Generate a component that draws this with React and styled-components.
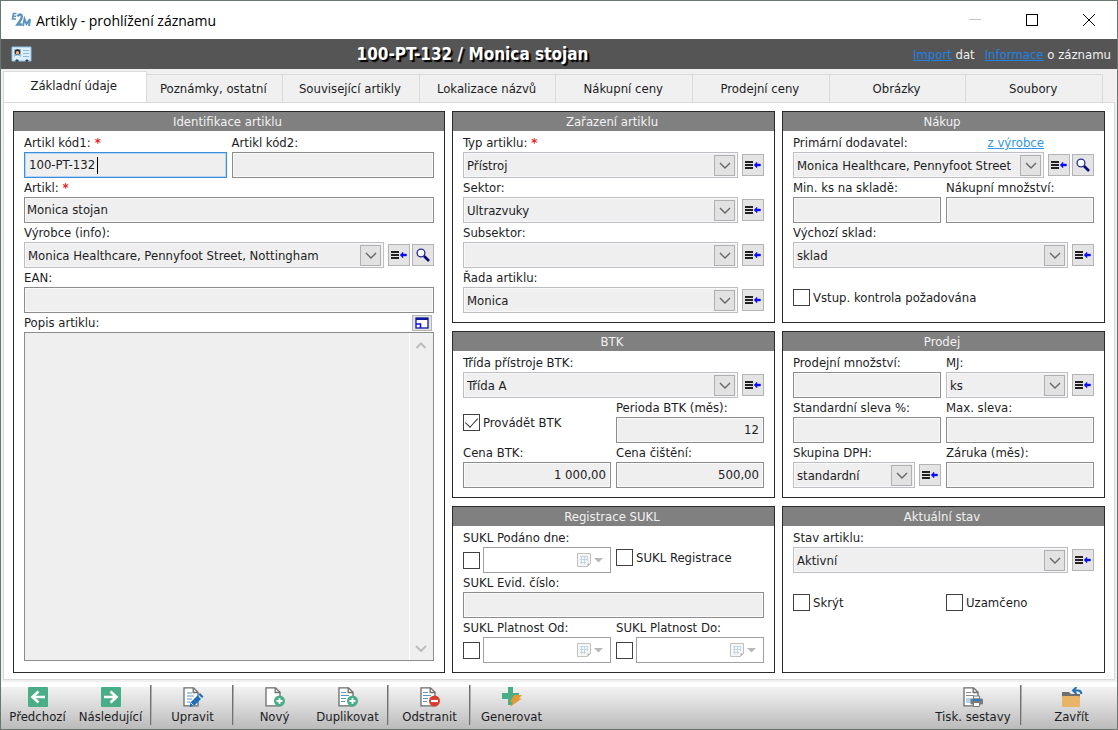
import React, { useState } from "react";
import styled, { createGlobalStyle, css } from "styled-components";

const GlobalStyle = createGlobalStyle`
  * {
    box-sizing: border-box;
  }
  body {
    margin: 0;
    background: #f0f0f0;
  }
  body,
  button,
  input,
  select,
  textarea {
    font-family: "DejaVu Sans Condensed", "DejaVu Sans", sans-serif;
    font-size: 13px;
    color: #1c1c24;
  }
`;

const Window = styled.div`
  min-height: 100vh;
  display: flex;
  flex-direction: column;
  border: 1px solid #68776d;
  background: #f0f0f0;
`;

const TitleBar = styled.header`
  display: flex;
  align-items: center;
  height: 38px;
  padding-left: 10px;
  background: #ffffff;
`;
const AppTitle = styled.h1`
  flex: 1;
  margin: 0 0 0 4px;
  font-family: "Open Sans", "Noto Sans", sans-serif;
  font-size: 14px;
  font-weight: 400;
  color: #000000;
`;
const WindowButton = styled.button`
  display: flex;
  align-items: center;
  justify-content: center;
  width: 57px;
  height: 36px;
  padding: 0;
  border: none;
  background: none;
`;

const RecordBar = styled.div`
  display: flex;
  align-items: center;
  height: 30px;
  padding: 0 6px 0 10px;
  background: #555555;
`;
const RecordTitle = styled.h2`
  flex: 1;
  margin: 0;
  text-align: center;
  font-size: 17px;
  color: #ffffff;
  text-shadow: 2px 2px 1px #000000;
`;
const RecordLinks = styled.div`
  display: flex;
  gap: 10px;
  color: #f0f0f0;
  a {
    color: #1e82e6;
  }
`;

const Tabs = styled.nav`
  display: flex;
  align-items: flex-end;
  height: 33px;
  padding: 0 14px 0 2px;
`;
const Tab = styled.button`
  flex: 137 1 0;
  min-width: 0;
  height: 28px;
  padding: 0 2px 0 0;
  border: 1px solid #dadada;
  border-left: none;
  border-bottom: none;
  background: #f0f0f0;
  white-space: nowrap;
  ${(props) =>
    props.$active &&
    css`
      flex-grow: 143;
      height: 31px;
      padding-bottom: 3px;
      border-left: 1px solid #dadada;
      background: #ffffff;
    `}
`;
const Page = styled.main`
  flex: 1;
  display: grid;
  grid-template-columns: 432fr 323fr 323fr;
  grid-template-rows: auto auto auto;
  align-content: start;
  gap: 8px 7px;
  margin: 0 2px 2px;
  padding: 8px 9px 6px;
  border: 1px solid #dadada;
  background: #ffffff;
`;

const GroupBox = styled.section`
  display: flex;
  flex-direction: column;
  min-width: 0;
  border: 1px solid #2a2a2a;
  background: #ffffff;
  ${(props) => props.$tall && "grid-row: span 3;"}
`;
const GroupTitle = styled.h3`
  height: 19px;
  margin: 0;
  padding-right: 3px;
  line-height: 20px;
  text-align: center;
  font-size: 13px;
  font-weight: 400;
  color: #f2f2f2;
  background: #808080;
`;
const Fields = styled.div`
  display: grid;
  grid-template-columns: repeat(2, minmax(0, 1fr));
  column-gap: 5px;
  padding: 2px 10px 0;
`;
const FieldsEnd = styled.div`
  height: 9px;
`;
const FieldBox = styled.div`
  min-width: 0;
  ${(props) => props.$wide && "grid-column: span 2;"}
`;
const LabelRow = styled.div`
  display: flex;
  justify-content: space-between;
  height: 19px;
  line-height: 20px;
  white-space: nowrap;
  a {
    margin-right: 50px;
    color: #3296e6;
  }
`;
const Star = styled.span`
  margin-left: 4px;
  font-weight: 700;
  color: #ee2222;
`;
const ControlRow = styled.div`
  position: relative;
  display: flex;
  align-items: center;
  gap: 2px;
`;
const TextInput = styled.input`
  width: 100%;
  height: 26px;
  padding: 0 4px 1px 2px;
  border: 1px solid #8c8c8c;
  outline: none;
  background: #efefef;
  box-shadow: inset 0 0 0 1px #fafafa;
  text-align: ${(props) => (props.$right ? "right" : "left")};
  ${(props) =>
    props.$focused &&
    css`
      padding-left: 4px;
      border-color: #3a8fdc;
      box-shadow: inset 0 0 0 1px #b4d6f4;
    `}
`;
const Caret = styled.span`
  position: absolute;
  left: 73px;
  width: 1px;
  height: 17px;
  background: #000000;
`;

const Combo = styled.div`
  flex: 1;
  display: flex;
  align-items: center;
  min-width: 0;
  height: 26px;
  margin-right: 2px;
  padding: 1px 2px 1px 1px;
  border: 1px solid #bdbdc4;
  background: #efefef;
  box-shadow: inset 0 0 0 1px #f8f8f8;
`;
const ComboSelect = styled.select`
  flex: 1;
  min-width: 0;
  height: 22px;
  padding: 0 0 0 2px;
  border: none;
  outline: none;
  appearance: none;
  background: transparent;
`;
const ComboArrow = styled.span`
  display: flex;
  align-items: center;
  justify-content: center;
  width: 21px;
  height: 21px;
  border: 1px solid #b0b0b0;
  background: #e2e2e2;
  pointer-events: none;
`;
const IconButton = styled.button`
  display: flex;
  align-items: center;
  justify-content: center;
  flex: none;
  width: ${(props) => (props.$small ? "20px" : "22px")};
  height: ${(props) => (props.$small ? "16px" : "22px")};
  padding: 0;
  border: 1px solid #b4b4b4;
  background: #e4e4e4;
`;

const CheckLabel = styled.label`
  display: flex;
  align-items: center;
  gap: 3px;
  height: 45px;
  padding-top: ${(props) => (props.$high ? "3px" : "14px")};
  white-space: nowrap;
  ${(props) => props.$wide && "grid-column: span 2;"}
`;
const CheckInput = styled.input`
  display: grid;
  place-items: center;
  flex: none;
  width: 17px;
  height: 17px;
  margin: 0;
  border: 1px solid #404040;
  appearance: none;
  background: #ffffff;
  &:checked::after {
    content: "";
    width: 6px;
    height: 11px;
    margin-bottom: 3px;
    border: solid #333333;
    border-width: 0 1px 1px 0;
    transform: rotate(42deg);
  }
`;
const DateBox = styled.div`
  flex: 1;
  display: flex;
  align-items: center;
  min-width: 0;
  height: 26px;
  margin-left: 1px;
  padding-right: 7px;
  border: 1px solid #a0a0a0;
  background: #ffffff;
`;
const DateInput = styled.input`
  flex: 1;
  min-width: 0;
  border: none;
  outline: none;
  background: transparent;
`;

const MemoSection = styled.div`
  flex: 1;
  display: flex;
  flex-direction: column;
  padding: 0 10px 11px;
`;
const MemoLabelRow = styled(LabelRow)`
  align-items: center;
  padding-right: 2px;
`;
const Memo = styled.div`
  flex: 1;
  display: flex;
  border: 1px solid #8c8c8c;
  background: #efefef;
`;
const MemoText = styled.textarea`
  flex: 1;
  min-width: 0;
  border: none;
  outline: none;
  resize: none;
  background: transparent;
`;
const MemoRail = styled.div`
  display: flex;
  flex-direction: column;
  justify-content: space-between;
  align-items: center;
  width: 24px;
  padding: 9px 2px 8px 0;
  border-left: 1px solid #ffffff;
`;

const Toolbar = styled.footer`
  display: flex;
  height: 47px;
  border-top: 5px solid #ffffff;
  background: linear-gradient(#f2f2f2, #dadada 45%, #bababa);
`;
const ToolButton = styled.button`
  display: flex;
  flex-direction: column;
  align-items: center;
  gap: 1px;
  width: ${(props) => props.$width || 73}px;
  padding: 0;
  border: none;
  background: none;
  line-height: 18px;
  white-space: nowrap;
`;
const ToolDivider = styled.span`
  width: 1px;
  height: 40px;
  margin: -2px 5px 0 3px;
  background: #707070;
  box-shadow: 1px 0 0 #b0b0b0;
`;
const Spacer = styled.span`
  flex: 1;
`;

const AppLogo = () => (
  <svg width="21" height="16" viewBox="0 0 21 16" fill="none" stroke="#5b93bf">
    <path d="M5.500 1.500H2.500L1.500 7H5M2 4.200h3" strokeWidth="1.600" />
    <path d="M6.500 4.500Q8 1.500 10.500 3Q12 5.500 6.500 12.500H11" strokeWidth="2.400" />
    <path d="M12 14l1.500-7 2 5 3.500-5-1 7" strokeWidth="2" />
  </svg>
);

const CardIcon = () => (
  <svg width="21" height="16" viewBox="0 0 21 16">
    <path
      d="M1 1h19v14h-3l-1-1-2 1H8l-2-1-2 1H1z"
      fill="#dceefb"
      stroke="#8dbfe6"
    />
    <rect x="3" y="3" width="7" height="8" fill="#8dbce2" />
    <circle cx="6.500" cy="6" r="2.800" fill="#3a2620" />
    <circle cx="6.500" cy="6.800" r="1.700" fill="#f0b27a" />
    <path d="M3 11q3.500-3 7 0z" fill="#f6f6f6" />
    <path d="M12 4.500h6M12 7.500h6M12 10.500h6" stroke="#8fb9dc" />
    <path d="M4 15l2-2 2 2zM14 15l2-2 2 2z" fill="#244a6c" />
  </svg>
);

const Chevron = ({ up, color = "#666666", thick = 1.4 }) => (
  <svg width="12" height="8" viewBox="0 0 12 8" fill="none">
    <path
      d={up ? "M1.500 6L6 1.500L10.500 6" : "M1 2L6 7L11 2"}
      stroke={color}
      strokeWidth={thick}
    />
  </svg>
);

const ListIcon = () => (
  <svg width="16" height="12" viewBox="0 0 16 12">
    <path d="M0 3h8M0 6h8M0 9h8" stroke="#222222" strokeWidth="1.900" />
    <path d="M9 6l3-3v2h3.500v2H12v2z" fill="#0a0aff" stroke="#0a0aff" strokeWidth=".4" />
  </svg>
);

const SearchIcon = () => (
  <svg width="14" height="14" viewBox="0 0 14 14" fill="none">
    <circle cx="5" cy="5" r="3.900" fill="#f6fbff" stroke="#2a2a90" strokeWidth="1.300" />
    <path d="M8 8l5 5" stroke="#0b0b80" strokeWidth="2.600" />
  </svg>
);

const ExpandIcon = () => (
  <svg width="14" height="12" viewBox="0 0 14 12" fill="none">
    <rect x="1" y="1" width="12" height="10" fill="#ffffff" stroke="#0a1a9a" strokeWidth="1.300" />
    <path d="M1 2h12" stroke="#0a1a9a" strokeWidth="2" />
    <path d="M1 7h4.500v4" stroke="#0a0aff" strokeWidth="1.500" />
  </svg>
);

const CalendarIcon = () => (
  <svg width="26" height="16" viewBox="0 0 26 16" fill="none">
    <path d="M.5 1.500h13v10l-3 3H.5z" fill="#f4f6f8" stroke="#c6c0ba" />
    <path d="M3 4.500h8M3 7.500h8M3 10.500h6M4.500 4v8M7.500 4v8M10.500 4v5" stroke="#c3d6e4" />
    <path d="M13.500 11.500h-3v3z" fill="#b8b0a8" />
    <path d="M17 6h9l-4.500 4.500z" fill="#b8b8b8" />
  </svg>
);

const ArrowIcon = ({ right }) => (
  <svg width="20" height="20" viewBox="0 0 20 20" fill="none">
    <rect width="20" height="20" rx="1" fill="#49ae87" />
    <path
      d={right ? "M3 10h12M9.500 4.500L15.500 10L9.500 15.500" : "M17 10H5M10.500 4.500L4.500 10L10.500 15.500"}
      stroke="#ffffff"
      strokeWidth="2.600"
    />
  </svg>
);

const docShapes = {
  edit: (
    <>
      <path d="M5 6h5M5 9h7M5 12h5M5 15h3" stroke="#5c94c8" />
      <path d="M8.500 15.500l7-7 3.500 3.500-7 7-4.500 1z" fill="#1f6fb8" />
      <path d="M16.500 7.500l1.500-1.500 3.500 3.500-1.500 1.500z" fill="#1f6fb8" />
      <path d="M9 16l2.500 2.500" stroke="#ffffff" strokeWidth=".8" />
    </>
  ),
  plus: (
    <>
      <circle cx="15.500" cy="14" r="5.500" fill="#49ae87" />
      <path d="M12.500 14h6M15.500 11v6" stroke="#ffffff" strokeWidth="1.800" />
    </>
  ),
  minus: (
    <>
      <circle cx="15.500" cy="14" r="5.500" fill="#d83c2b" />
      <path d="M12 14h7" stroke="#ffffff" strokeWidth="2.200" />
    </>
  ),
  print: (
    <>
      <rect x="4" y="11" width="5" height="5" fill="#aed5f4" />
      <path d="M11.500 9h6v3h-6z" fill="#ffffff" stroke="#777777" />
      <rect x="8.500" y="11.500" width="12.500" height="6" rx="1" fill="#7c7c7c" />
      <path d="M11 13h7.500" stroke="#2b78c4" strokeWidth="2" />
      <path d="M11.500 15.500h6v4h-6z" fill="#ffffff" stroke="#777777" />
    </>
  ),
};

const DocIcon = ({ kind, lines }) => (
  <svg width="22" height="20" viewBox="0 0 22 20" fill="none">
    <path d="M2 .8h9.500l4.500 4.500v13.500H2z" fill="#ffffff" stroke="#6c6c6c" strokeWidth="1.300" />
    <path d="M11.200 1v4.500H16" stroke="#6c6c6c" strokeWidth="1.300" />
    {lines && <path d="M4 5.500h5M4 8.500h8M4 11.500h5M4 14.500h4" stroke={lines} strokeWidth="1.200" />}
    {docShapes[kind]}
  </svg>
);

const GenerateIcon = () => (
  <svg width="22" height="20" viewBox="0 0 22 20">
    <path d="M7 0h5v6h6v6h-6v6H7v-6H1V6h6z" fill="#49ae87" />
    <path d="M13 8h8l-3 3.500h3L9 20l3-5H9z" fill="#e59a36" />
  </svg>
);

const FolderIcon = () => (
  <svg width="22" height="20" viewBox="0 0 22 20" fill="none">
    <path d="M1 5h7l2 2h9v4H1z" fill="#6f6f6f" />
    <rect x="1" y="9" width="18" height="11" rx="1" fill="#eab468" />
    <path d="M12 3.500h5q3 0 3.500 3.500M15.500 0L12 3.500L15.500 7" stroke="#2670b4" strokeWidth="2" />
  </svg>
);

const Field = ({ id, label, wide, required, value = "", right, focused }) => (
  <FieldBox $wide={wide}>
    <LabelRow>
      <label htmlFor={id}>
        {label}
        {required && <Star>*</Star>}
      </label>
    </LabelRow>
    <ControlRow>
      <TextInput id={id} type="text" defaultValue={value} $right={right} $focused={focused} />
      {focused && <Caret />}
    </ControlRow>
  </FieldBox>
);

const SelectField = ({ id, label, wide, required, value = "", link, search }) => (
  <FieldBox $wide={wide}>
    <LabelRow>
      <label htmlFor={id}>
        {label}
        {required && <Star>*</Star>}
      </label>
      {link && <a href="#vyrobce">{link}</a>}
    </LabelRow>
    <ControlRow>
      <Combo>
        <ComboSelect id={id} defaultValue={value}>
          <option value={value}>{value}</option>
        </ComboSelect>
        <ComboArrow>
          <Chevron />
        </ComboArrow>
      </Combo>
      <IconButton type="button" aria-label="Vybrat ze seznamu">
        <ListIcon />
      </IconButton>
      {search && (
        <IconButton type="button" aria-label="Hledat">
          <SearchIcon />
        </IconButton>
      )}
    </ControlRow>
  </FieldBox>
);

const DateField = ({ id, label }) => (
  <FieldBox>
    <LabelRow>
      <label htmlFor={id}>{label}</label>
    </LabelRow>
    <ControlRow>
      <CheckInput type="checkbox" aria-label={label} />
      <DateBox>
        <DateInput id={id} type="text" />
        <CalendarIcon />
      </DateBox>
    </ControlRow>
  </FieldBox>
);

const Check = ({ label, wide, high, checked }) => (
  <CheckLabel $wide={wide} $high={high}>
    <CheckInput type="checkbox" defaultChecked={checked} />
    {label}
  </CheckLabel>
);

const Group = ({ title, children }) => (
  <GroupBox>
    <GroupTitle>{title}</GroupTitle>
    <Fields>{children}</Fields>
    <FieldsEnd />
  </GroupBox>
);

const tabNames = [
  "Základní údaje",
  "Poznámky, ostatní",
  "Související artikly",
  "Lokalizace názvů",
  "Nákupní ceny",
  "Prodejní ceny",
  "Obrázky",
  "Soubory",
];

const App = () => {
  const [activeTab, setActiveTab] = useState(0);

  return (
    <Window>
      <GlobalStyle />
      <TitleBar>
        <AppLogo />
        <AppTitle>Artikly - prohlížení záznamu</AppTitle>
        <WindowButton aria-label="Minimalizovat">
          <svg width="12" height="12" stroke="#c4c4c4">
            <path d="M0 5.500h12" />
          </svg>
        </WindowButton>
        <WindowButton aria-label="Maximalizovat">
          <svg width="12" height="12" fill="none" stroke="#000000">
            <rect x=".5" y=".5" width="11" height="11" />
          </svg>
        </WindowButton>
        <WindowButton aria-label="Zavřít okno">
          <svg width="12" height="12" stroke="#000000">
            <path d="M0 0l12 12M12 0L0 12" />
          </svg>
        </WindowButton>
      </TitleBar>
      <RecordBar>
        <CardIcon />
        <RecordTitle>100-PT-132 / Monica stojan</RecordTitle>
        <RecordLinks>
          <span>
            <a href="#import">Import</a> dat
          </span>
          <span>
            <a href="#informace">Informace</a> o záznamu
          </span>
        </RecordLinks>
      </RecordBar>
      <Tabs>
        {tabNames.map((name, index) => (
          <Tab
            key={name}
            type="button"
            $active={index === activeTab}
            onClick={() => setActiveTab(index)}
          >
            {name}
          </Tab>
        ))}
      </Tabs>
      <Page>
        <GroupBox $tall>
          <GroupTitle>Identifikace artiklu</GroupTitle>
          <Fields>
            <Field id="kod1" label="Artikl kód1:" required value="100-PT-132" focused />
            <Field id="kod2" label="Artikl kód2:" />
            <Field id="artikl" label="Artikl:" required wide value="Monica stojan" />
            <SelectField
              id="vyrobce"
              label="Výrobce (info):"
              wide
              search
              value="Monica Healthcare, Pennyfoot Street, Nottingham"
            />
            <Field id="ean" label="EAN:" wide />
          </Fields>
          <MemoSection>
            <MemoLabelRow>
              <label htmlFor="popis">Popis artiklu:</label>
              <IconButton type="button" $small aria-label="Zvětšit">
                <ExpandIcon />
              </IconButton>
            </MemoLabelRow>
            <Memo>
              <MemoText id="popis" />
              <MemoRail>
                <Chevron up color="#bcbcbc" thick={2} />
                <Chevron color="#bcbcbc" thick={2} />
              </MemoRail>
            </Memo>
          </MemoSection>
        </GroupBox>

        <Group title="Zařazení artiklu">
          <SelectField id="typ" label="Typ artiklu:" required wide value="Přístroj" />
          <SelectField id="sektor" label="Sektor:" wide value="Ultrazvuky" />
          <SelectField id="subsektor" label="Subsektor:" wide />
          <SelectField id="rada" label="Řada artiklu:" wide value="Monica" />
        </Group>

        <Group title="Nákup">
          <SelectField
            id="dodavatel"
            label="Primární dodavatel:"
            link="z výrobce"
            wide
            search
            value="Monica Healthcare, Pennyfoot Street"
          />
          <Field id="minks" label="Min. ks na skladě:" />
          <Field id="nakupmn" label="Nákupní množství:" />
          <SelectField id="sklad" label="Výchozí sklad:" wide value="sklad" />
          <Check label="Vstup. kontrola požadována" wide />
        </Group>

        <Group title="BTK">
          <SelectField id="trida" label="Třída přístroje BTK:" wide value="Třída A" />
          <Check label="Provádět BTK" high checked />
          <Field id="perioda" label="Perioda BTK (měs):" value="12" right />
          <Field id="cenabtk" label="Cena BTK:" value="1 000,00" right />
          <Field id="cenacist" label="Cena čištění:" value="500,00" right />
        </Group>

        <Group title="Prodej">
          <Field id="prodejmn" label="Prodejní množství:" />
          <SelectField id="mj" label="MJ:" value="ks" />
          <Field id="sleva" label="Standardní sleva %:" />
          <Field id="maxsleva" label="Max. sleva:" />
          <SelectField id="dph" label="Skupina DPH:" value="standardní" />
          <Field id="zaruka" label="Záruka (měs):" />
        </Group>

        <Group title="Registrace SUKL">
          <DateField id="podano" label="SUKL Podáno dne:" />
          <Check label="SUKL Registrace" />
          <Field id="evid" label="SUKL Evid. číslo:" wide />
          <DateField id="platod" label="SUKL Platnost Od:" />
          <DateField id="platdo" label="SUKL Platnost Do:" />
        </Group>

        <Group title="Aktuální stav">
          <SelectField id="stav" label="Stav artiklu:" wide value="Aktivní" />
          <Check label="Skrýt" />
          <Check label="Uzamčeno" />
        </Group>
      </Page>
      <Toolbar>
        <ToolButton>
          <ArrowIcon />
          Předchozí
        </ToolButton>
        <ToolButton>
          <ArrowIcon right />
          Následující
        </ToolButton>
        <ToolDivider />
        <ToolButton>
          <DocIcon kind="edit" />
          Upravit
        </ToolButton>
        <ToolDivider />
        <ToolButton>
          <DocIcon kind="plus" />
          Nový
        </ToolButton>
        <ToolButton>
          <DocIcon kind="plus" lines="#5c94c8" />
          Duplikovat
        </ToolButton>
        <ToolDivider />
        <ToolButton>
          <DocIcon kind="minus" lines="#5c94c8" />
          Odstranit
        </ToolButton>
        <ToolDivider />
        <ToolButton>
          <GenerateIcon />
          Generovat
        </ToolButton>
        <Spacer />
        <ToolButton $width={88}>
          <DocIcon kind="print" lines="#8a8a8a" />
          Tisk. sestavy
        </ToolButton>
        <ToolDivider />
        <ToolButton $width={91}>
          <FolderIcon />
          Zavřít
        </ToolButton>
      </Toolbar>
    </Window>
  );
};

export default App;
